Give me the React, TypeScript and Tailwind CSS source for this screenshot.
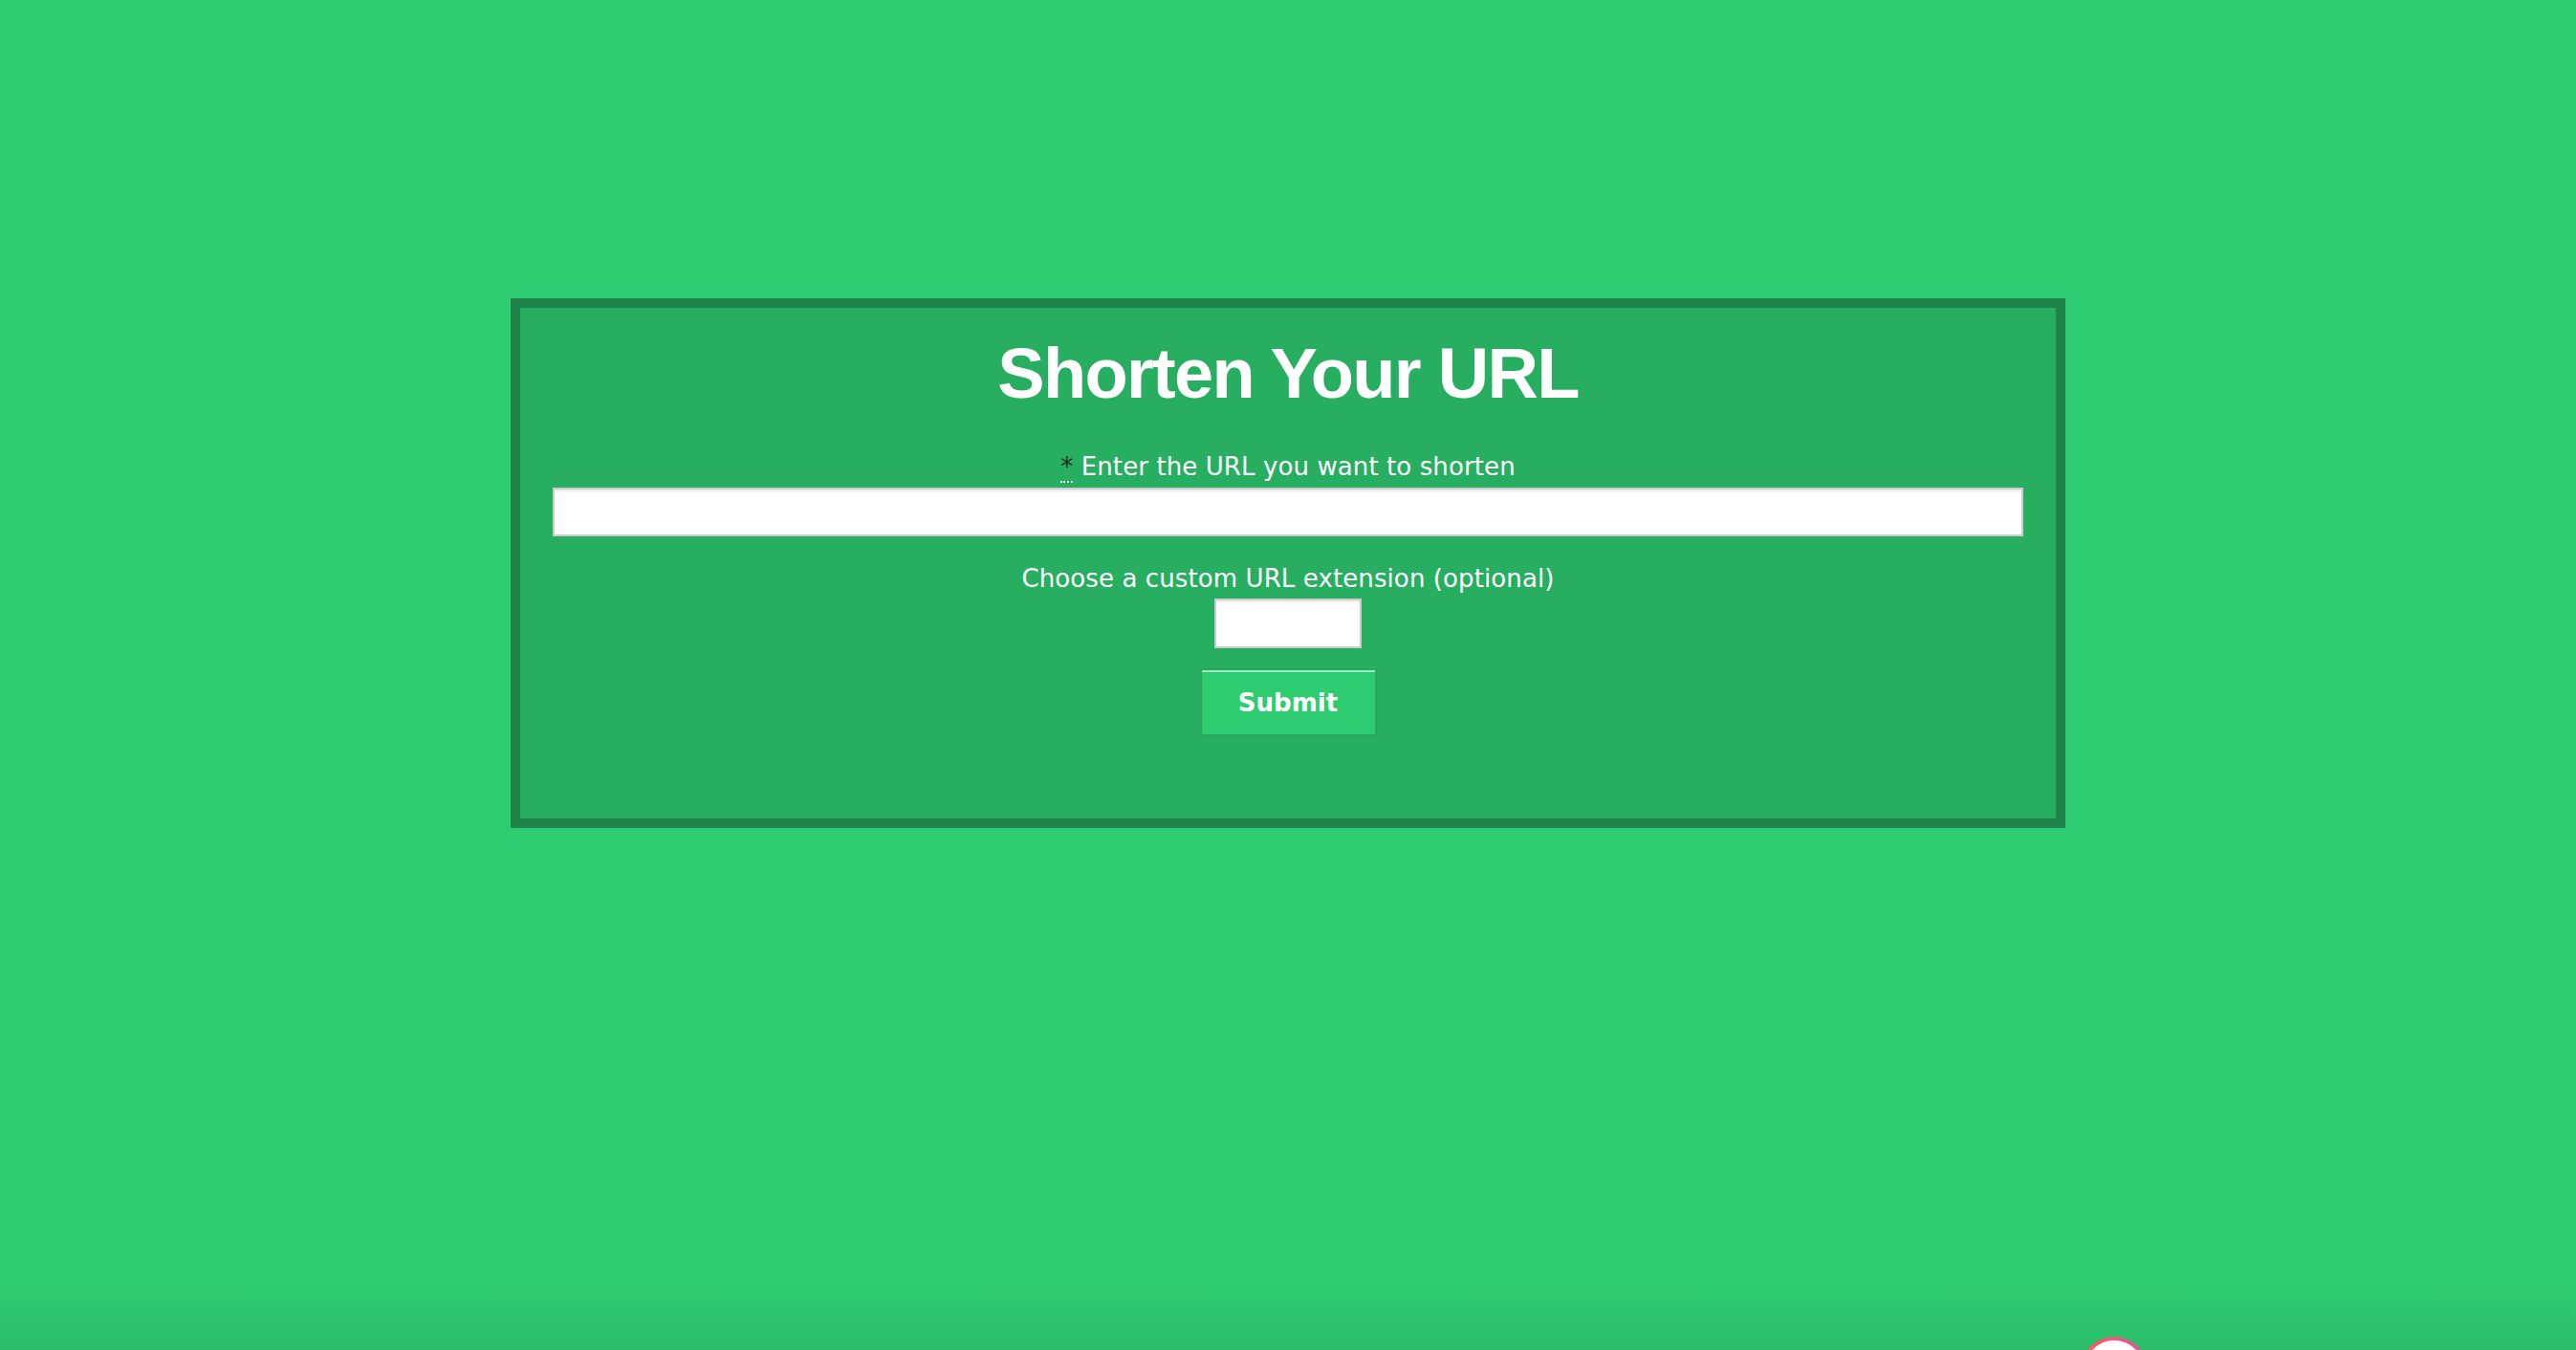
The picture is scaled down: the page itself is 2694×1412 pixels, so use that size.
export default function App() {
  return (
    <div className="relative h-[1412px] overflow-hidden bg-[#2ecc71] pt-[312px]">
      <div className="mx-auto w-[1626px] border-[10px] border-[#1e8449] bg-[#27ae60] px-[34px] pb-[86px] pt-[26px] text-center">
        <h1 className="font-['Liberation_Sans',Arial,sans-serif] text-[74px] font-bold leading-[85px] tracking-[-1.7px] text-white">
          Shorten Your URL
        </h1>
        <form className="flex flex-col items-center font-['DejaVu_Sans',Verdana,sans-serif] text-[26px] leading-[30px] tracking-[0.1px] text-white">
          <label htmlFor="url" className="mt-[40px] block">
            <abbr
              title="required"
              className="border-b-2 border-dotted border-white/80 text-[#1f2a24] no-underline"
            >
              *
            </abbr>{" "}
            Enter the URL you want to shorten
          </label>
          <input
            id="url"
            type="text"
            className="mt-[7px] h-[51px] w-full border-2 border-[#cccccc] bg-white shadow-[inset_0_2px_3px_rgba(0,0,0,0.08)] outline-none"
          />
          <label htmlFor="ext" className="mt-[29px] block">
            Choose a custom URL extension (optional)
          </label>
          <input
            id="ext"
            type="text"
            className="mt-[6px] h-[52px] w-[154px] border-2 border-[#cccccc] bg-white shadow-[inset_0_2px_3px_rgba(0,0,0,0.08)] outline-none"
          />
          <button
            type="submit"
            className="mt-[21px] h-[71px] w-[185px] border-2 border-[#29a85d] bg-[#2ecc71] text-[26px] font-bold tracking-normal text-white shadow-[inset_0_2px_0_rgba(255,255,255,0.55)]"
          >
            Submit
          </button>
        </form>
      </div>
      <div className="pointer-events-none absolute inset-x-0 bottom-0 h-[70px] bg-gradient-to-b from-transparent to-[#2bbd69]" />
      <div className="absolute left-[2176px] top-[1398px] h-[70px] w-[70px] rounded-full bg-gradient-to-r from-[#ff5a5f] to-[#e0559a] p-[4px]">
        <div className="h-full w-full rounded-full bg-white" />
      </div>
    </div>
  );
}
